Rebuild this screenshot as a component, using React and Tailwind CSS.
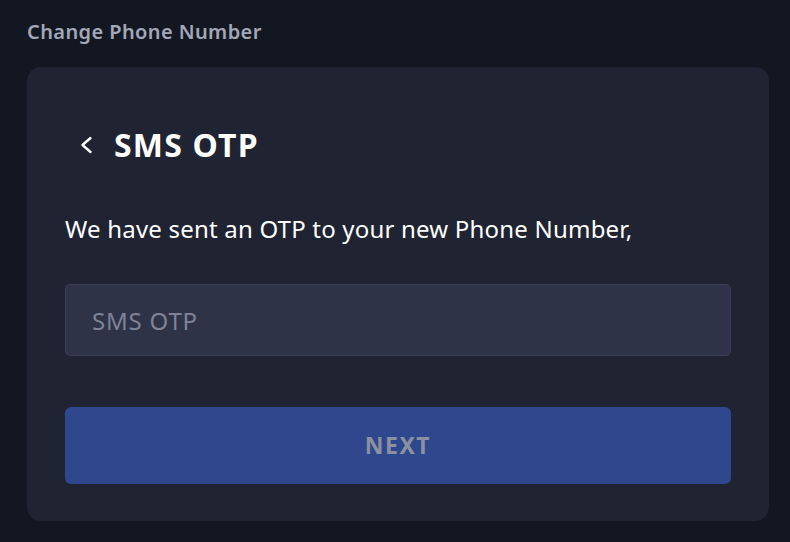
export default function App() {
  return (
    <div
      className="min-h-[542px] w-full bg-[#131722] pl-[27px] pr-[21px] pt-[18px] pb-[21px]"
      style={{ fontFamily: '"Noto Sans", "Open Sans", sans-serif' }}
    >
      <h2 className="text-[20px] font-semibold leading-[28px] tracking-[0.4px] text-[#a3a7b7]">Change Phone Number</h2>

      {/* Card */}
      <div className="mt-[21px] rounded-[14px] bg-[#1f2332] px-[38px] pt-[58px] pb-[37px]">
        <div className="flex items-center">
          <button className="ml-[14px] flex h-[40px] items-center text-white">
            <svg width="14" height="18" viewBox="0 0 14 18" fill="none">
              <polyline
                points="11.5,2 3.5,9 11.5,16"
                stroke="currentColor"
                strokeWidth="2.4"
                strokeLinecap="round"
                strokeLinejoin="round"
              />
            </svg>
          </button>
          <h1 className="ml-[21px] text-[32px] font-bold leading-[40px] tracking-[1.2px] text-white">SMS OTP</h1>
        </div>

        <p className="mt-[48px] text-[24px] leading-[32px] tracking-[0.2px] text-white">
          We have sent an OTP to your new Phone Number,
        </p>

        <input
          placeholder="SMS OTP"
          className="mt-[39px] block h-[72px] w-full rounded-[5px] border border-[#3a3f53] bg-[#2e3347] px-[26px] text-[24px] tracking-[0.8px] text-white outline-none placeholder:text-[#7e8397]"
        />

        <button className="mt-[51px] flex h-[77px] w-full items-center justify-center rounded-[6px] bg-[#2f478c] text-[23px] font-bold tracking-[1.5px] text-[#8c91a1]">
          NEXT
        </button>
      </div>
    </div>
  );
}
